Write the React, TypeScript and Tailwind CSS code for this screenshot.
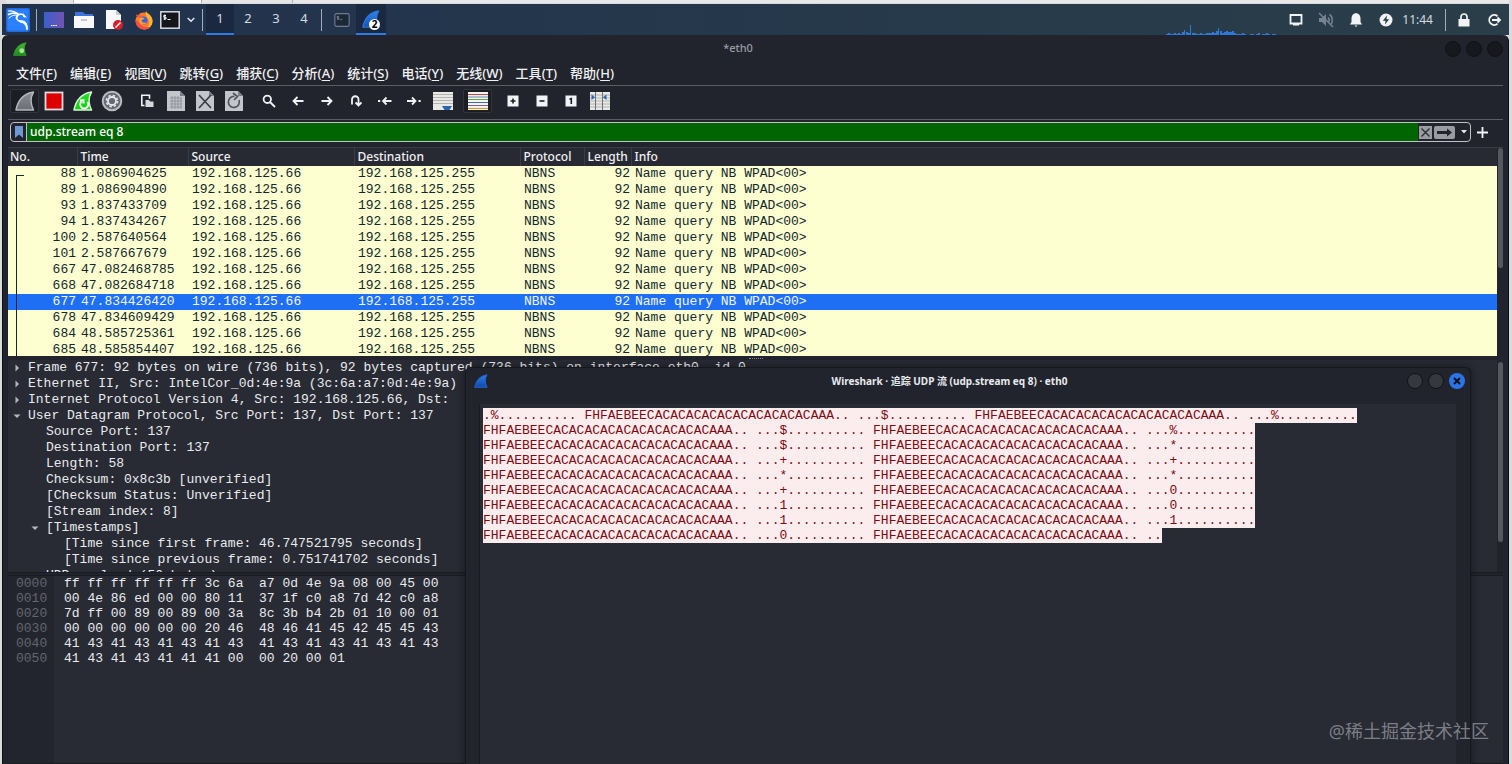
import { ReactNode, useState } from "react";

const packets = [
  { no: 88, time: "1.086904625" },
  { no: 89, time: "1.086904890" },
  { no: 93, time: "1.837433709" },
  { no: 94, time: "1.837434267" },
  { no: 100, time: "2.587640564" },
  { no: 101, time: "2.587667679" },
  { no: 667, time: "47.082468785" },
  { no: 668, time: "47.082684718" },
  { no: 677, time: "47.834426420" },
  { no: 678, time: "47.834609429" },
  { no: 684, time: "48.585725361" },
  { no: 685, time: "48.585854407" },
];

const menus = [
  ["文件", "F"],
  ["编辑", "E"],
  ["视图", "V"],
  ["跳转", "G"],
  ["捕获", "C"],
  ["分析", "A"],
  ["统计", "S"],
  ["电话", "Y"],
  ["无线", "W"],
  ["工具", "T"],
  ["帮助", "H"],
];

const details = [
  {
    level: 0,
    arrow: "right",
    text: "Frame 677: 92 bytes on wire (736 bits), 92 bytes captured (736 bits) on interface eth0, id 0",
  },
  {
    level: 0,
    arrow: "right",
    text: "Ethernet II, Src: IntelCor_0d:4e:9a (3c:6a:a7:0d:4e:9a)",
  },
  {
    level: 0,
    arrow: "right",
    text: "Internet Protocol Version 4, Src: 192.168.125.66, Dst:",
  },
  {
    level: 0,
    arrow: "down",
    text: "User Datagram Protocol, Src Port: 137, Dst Port: 137",
  },
  { level: 1, arrow: "", text: "Source Port: 137" },
  { level: 1, arrow: "", text: "Destination Port: 137" },
  { level: 1, arrow: "", text: "Length: 58" },
  { level: 1, arrow: "", text: "Checksum: 0x8c3b [unverified]" },
  { level: 1, arrow: "", text: "[Checksum Status: Unverified]" },
  { level: 1, arrow: "", text: "[Stream index: 8]" },
  { level: 1, arrow: "down", text: "[Timestamps]" },
  {
    level: 2,
    arrow: "",
    text: "[Time since first frame: 46.747521795 seconds]",
  },
  {
    level: 2,
    arrow: "",
    text: "[Time since previous frame: 0.751741702 seconds]",
  },
  { level: 1, arrow: "", text: "UDP payload (50 bytes)" },
];

const levels = ["pl-0", "pl-[18px]", "pl-9"];

const hexRows = [
  ["0000", "ff ff ff ff ff ff 3c 6a  a7 0d 4e 9a 08 00 45 00"],
  ["0010", "00 4e 86 ed 00 00 80 11  37 1f c0 a8 7d 42 c0 a8"],
  ["0020", "7d ff 00 89 00 89 00 3a  8c 3b b4 2b 01 10 00 01"],
  ["0030", "00 00 00 00 00 00 20 46  48 46 41 45 42 45 45 43"],
  ["0040", "41 43 41 43 41 43 41 43  41 43 41 43 41 43 41 43"],
  ["0050", "41 43 41 43 41 41 41 00  00 20 00 01"],
];

// NetBIOS encoding of "WPAD" padded with blanks
const nbName = "FHFAEBEE" + "CA".repeat(11) + "AA";
const dots = "..........";
const streamLines = [
  `.%${dots} ${nbName}.. ...$${dots} ${nbName}.. ...%${dots}`,
  `${nbName}.. ...$${dots} ${nbName}.. ...%${dots}`,
  `${nbName}.. ...$${dots} ${nbName}.. ...*${dots}`,
  `${nbName}.. ...+${dots} ${nbName}.. ...+${dots}`,
  `${nbName}.. ...*${dots} ${nbName}.. ...*${dots}`,
  `${nbName}.. ...+${dots} ${nbName}.. ...0${dots}`,
  `${nbName}.. ...1${dots} ${nbName}.. ...0${dots}`,
  `${nbName}.. ...1${dots} ${nbName}.. ...1${dots}`,
  `${nbName}.. ...0${dots} ${nbName}.. ..`,
];

const cpu = [
  1, 2, 1, 1, 2, 1, 2, 1, 3, 5, 3, 2, 10, 2, 2, 1, 1, 2, 1, 1, 2, 2, 2, 3, 2, 4,
  7, 4, 2, 3, 4, 3, 3, 4, 2, 1, 1, 1, 2, 1, 0, 0, 1, 1, 0, 1, 2, 0, 1, 1, 2, 1,
  0, 1, 1,
];

function Fin({
  id,
  from,
  to,
  edge,
  className,
  children,
}: {
  id: string;
  from: string;
  to: string;
  edge: string;
  className: string;
  children?: ReactNode;
}) {
  return (
    <svg viewBox="0 0 20 20" className={className}>
      <defs>
        <linearGradient id={id} x1="0" y1="0" x2="0" y2="1">
          <stop offset="0" stopColor={from} />
          <stop offset="1" stopColor={to} />
        </linearGradient>
      </defs>
      <path
        d="M1 19C3 9 9 2.5 18.5 1C15.5 6 15.5 13 18.5 19Z"
        fill={`url(#${id})`}
        stroke={edge}
        strokeWidth="1.5"
        strokeLinejoin="round"
      />
      {children}
    </svg>
  );
}

function KaliIcon() {
  return (
    <svg viewBox="0 0 24 24" className="size-6">
      <rect width="24" height="24" rx="2" fill="#2468d8" />
      <rect x="1.5" y="1.5" width="21" height="21" rx="1" fill="#2a80ff" />
      <g fill="none" stroke="#fff" strokeLinecap="round">
        <path d="M2.500 3C6 2.500 9 3.500 11.500 5.500" strokeWidth="1.200" />
        <path
          d="M2.500 6.500C6 4.500 10 5 13 6.500C15 5.500 17 6 18.500 8.500"
          strokeWidth="1.600"
        />
        <path d="M3 10C5.500 7.500 8 7 11 7" strokeWidth="1" />
        <path
          d="M12 7C9 10 11 13 15 13.500C19 14 21 17 21 21"
          strokeWidth="1.800"
        />
        <path d="M14.500 13.500C17 13.500 19.500 15 20 17" strokeWidth="2.300" />
      </g>
      <path d="M17 5l1.500 2 2.500 2.500-3.500-.5z" fill="#fff" />
    </svg>
  );
}

function FirefoxIcon() {
  return (
    <svg viewBox="0 0 20 20" className="size-5">
      <circle cx="10" cy="11" r="8.500" fill="#ff7a2a" />
      <path
        d="M12 1c1 3 6 4 6.500 9.500c.4 5-3.500 9-8.500 9c6-3 6.500-9 3-12c-1-2-2-4-1-6.500z"
        fill="#ffb52e"
      />
      <path
        d="M2 4c0 2 1 3 2.500 3.500l3.500-.5l-2-2.500l-2.500 1z"
        fill="#ff5a3c"
      />
      <path
        d="M1.500 10c0 6 4 9.500 8.500 9.500c3 0 5-1 6.500-3c-5 2-10 0-11-4z"
        fill="#fb4a48"
      />
      <circle cx="9.500" cy="10.500" r="4" fill="#3c62dc" />
      <path
        d="M5.500 8c2-1 4-.5 5 .5c-1 1-2.500 1-3 2c.5 2.500 3.500 3 5.500 1.500c-1 3-6 3.500-8 .5z"
        fill="#ffa030"
      />
    </svg>
  );
}

function Terminal({ dim }: { dim?: boolean }) {
  return (
    <svg
      viewBox="0 0 20 18"
      className={dim ? "h-3.5 w-4 opacity-40" : "h-[18px] w-5"}
    >
      <rect
        x=".8"
        y=".8"
        width="18.4"
        height="16.4"
        rx={dim ? 2 : 0}
        fill="#14161c"
        stroke="#e4e6ea"
        strokeWidth="1.4"
      />
      <path
        d="M6 4.500H3.800v1.700H6V8H3.500M4.800 3.500v5.500M7.500 8.500h3"
        stroke="#fff"
        strokeWidth="1"
        fill="none"
      />
    </svg>
  );
}

function Page({ children }: { children?: ReactNode }) {
  return (
    <svg viewBox="0 0 20 22" className="h-[22px] w-5">
      <path d="M1 1h13l5 5v15H1z" fill="#c3c5cb" />
      <path d="M14 1v5h5z" fill="#7c7f88" />
      {children}
    </svg>
  );
}

function Line({ d }: { d: string }) {
  return (
    <svg
      viewBox="0 0 14 14"
      className="size-3.5"
      fill="none"
      stroke="#f2f3f5"
      strokeWidth="1.8"
    >
      <path d={d} />
    </svg>
  );
}

function Small({ d }: { d: string }) {
  return (
    <svg viewBox="0 0 12 12" className="size-3">
      <rect x=".5" y=".5" width="11" height="11" fill="#f2f3f5" />
      <path d={d} fill="none" stroke="#1b1d24" strokeWidth="1.6" />
    </svg>
  );
}

const toolGroups: { label: string; on?: boolean; icon: ReactNode }[][] = [
  [
    {
      label: "开始捕获分组",
      on: true,
      icon: (
        <Fin
          id="fin-gray"
          from="#8b8e97"
          to="#6b6e77"
          edge="#b4b6bc"
          className="size-5"
        />
      ),
    },
    {
      label: "停止捕获分组",
      icon: (
        <svg viewBox="0 0 20 20" className="size-5">
          <rect
            x="1.5"
            y="1.5"
            width="17"
            height="17"
            fill="#dc0000"
            stroke="#dcdde0"
            strokeWidth="1.8"
          />
        </svg>
      ),
    },
    {
      label: "重新开始当前捕获",
      icon: (
        <Fin
          id="fin-restart"
          from="#1fe01f"
          to="#17d017"
          edge="#d6f5d6"
          className="size-5"
        >
          <path
            d="M8.500 10.500a4 4 0 1 0 6 .5M7 9.500l3.500-.5v3.500"
            fill="none"
            stroke="#fff"
            strokeWidth="1.9"
          />
        </Fin>
      ),
    },
    {
      label: "捕获选项",
      icon: (
        <svg viewBox="0 0 22 22" className="size-[22px]" fill="none">
          <circle
            cx="11"
            cy="11"
            r="9.3"
            fill="#666973"
            stroke="#b9bbc2"
            strokeWidth="2"
          />
          <circle
            cx="11"
            cy="11"
            r="5.6"
            stroke="#e6e7ea"
            strokeWidth="1.6"
            strokeDasharray="2.4 2"
          />
          <circle cx="11" cy="11" r="4" stroke="#e6e7ea" strokeWidth="1.8" />
        </svg>
      ),
    },
  ],
  [
    {
      label: "打开",
      icon: (
        <svg viewBox="0 0 14 14" className="size-3.5">
          <path
            d="M4.500 11.500H1.800V1.300h7.700v3.500"
            fill="none"
            stroke="#f2f3f5"
            strokeWidth="1.6"
          />
          <path d="M5.500 6H9l1 1.500h3.500V13h-8z" fill="#d6d8dc" />
        </svg>
      ),
    },
    {
      label: "保存",
      icon: (
        <Page>
          <path
            d="M4 8h12M4 11h12M4 14h12M4 17h12M6 6v13M9 6v13M12 6v13M15 8v11"
            stroke="#8d9099"
            strokeWidth=".9"
          />
        </Page>
      ),
    },
    {
      label: "关闭",
      icon: (
        <Page>
          <path d="M4 5l12 13M16 5L4 18" stroke="#3a3d47" strokeWidth="1.7" />
        </Page>
      ),
    },
    {
      label: "重新加载",
      icon: (
        <Page>
          <path
            d="M15 10a5.500 5.500 0 1 1-4.500-3.500M9 3l4.500 3.500L10 10"
            fill="none"
            stroke="#50535d"
            strokeWidth="1.7"
          />
        </Page>
      ),
    },
  ],
  [
    {
      label: "查找分组",
      icon: (
        <Line d="M9 5.300a3.700 3.700 0 1 1-7.400 0a3.700 3.700 0 0 1 7.400 0M8 8l5 5" />
      ),
    },
    { label: "后退", icon: <Line d="M12.500 7H2.500M6.500 3L2.500 7l4 4" /> },
    { label: "前进", icon: <Line d="M1.500 7h10M7.500 3l4 4-4 4" /> },
    {
      label: "转到分组",
      icon: (
        <Line d="M3 10.500V5.500a3 3 0 0 1 6.500 0v6M6.500 8.500l3 3 3-3" />
      ),
    },
    {
      label: "首个分组",
      icon: <Line d="M13.500 7H5M8.500 3.500L5 7l3.500 3.500M0 7h2.200" />,
    },
    {
      label: "最新分组",
      icon: <Line d="M0 7h8.500M5 3.500L8.500 7 5 10.500M11.500 7h2.200" />,
    },
    {
      label: "自动滚动",
      icon: (
        <svg viewBox="0 0 20 20" className="size-5">
          <path d="M0 1h20v18H0z" fill="#e9e9e6" />
          <path
            d="M0 3.500h20M0 6.500h20M0 9.500h20M0 12.500h20"
            stroke="#b2b4b2"
            strokeWidth="1"
          />
          <path d="M9 15h10l-2.500 4h-5z" fill="#2e64ad" />
        </svg>
      ),
    },
  ],
  [
    {
      label: "分组着色",
      on: true,
      icon: (
        <svg viewBox="0 0 20 20" className="size-5">
          <path d="M0 1h20v18H0z" fill="#f4f4f1" />
          <path d="M0 3.500h20" stroke="#cf4540" strokeWidth="1" />
          <path d="M0 6h20" stroke="#6482bd" strokeWidth="1" />
          <path d="M0 8.500h20" stroke="#62a93d" strokeWidth="1" />
          <path d="M0 11.500h20" stroke="#4568ae" strokeWidth="1" />
          <path d="M0 14.500h20" stroke="#7a5c8d" strokeWidth="1" />
          <path d="M0 17.500h20" stroke="#c9a032" strokeWidth="1.2" />
        </svg>
      ),
    },
  ],
  [
    { label: "放大", icon: <Small d="M6 3.500v5M3.500 6h5" /> },
    { label: "缩小", icon: <Small d="M3.500 6h5" /> },
    { label: "正常大小", icon: <Small d="M4.500 4.300L6.300 3.600V9" /> },
    {
      label: "调整列宽",
      icon: (
        <svg viewBox="0 0 20 20" className="size-5">
          <path d="M0 1h20v18H0z" fill="#e9e9e6" />
          <path
            d="M0 4h20M0 7h20M0 10h20M0 13h20M0 16h20"
            stroke="#b2b4b2"
            strokeWidth="1"
          />
          <path d="M5.500 1v18M12.500 1v18" stroke="#6e7178" strokeWidth="1" />
          <path
            d="M1.500 3.500L5 6.300 1.500 9zM16.500 3.500L13 6.300 16.500 9z"
            fill="#2e64ad"
          />
        </svg>
      ),
    },
  ],
];

function TaskBar() {
  const [workspace, setWorkspace] = useState(1);

  return (
    <header className="flex h-[31px] shrink-0 items-center justify-between bg-linear-to-r from-[#21324d] to-[#2a3e49] pl-1 text-[13px] text-[#d5dae0]">
      <div className="flex h-full items-center">
        <button aria-label="应用程序">
          <KaliIcon />
        </button>
        <span className="mr-[7px] ml-1.5 h-[22px] w-px bg-[#a5abb5]" />
        <div className="flex items-center gap-2.5">
          <button aria-label="桌面" className="flex size-5 items-center">
            <svg viewBox="0 0 20 16" className="h-4 w-5">
              <defs>
                <linearGradient id="desk">
                  <stop offset="0" stopColor="#3b5fca" />
                  <stop offset="1" stopColor="#7353b4" />
                </linearGradient>
              </defs>
              <path d="M0 0h20v16H0z" fill="url(#desk)" />
              <path
                d="M7 13.500h6"
                stroke="#fff"
                strokeDasharray="1.5 .7"
              />
            </svg>
          </button>
          <button aria-label="文件管理器">
            <svg viewBox="0 0 20 20" className="size-5">
              <path d="M1 2h8l2 2h8v4H1z" fill="#3b74dc" />
              <path d="M0 6h20v12H0z" fill="#f8f8f8" />
              <path d="M7 10h6" stroke="#a9abb0" strokeWidth="1.2" />
            </svg>
          </button>
          <button aria-label="文本编辑器">
            <svg viewBox="0 0 20 20" className="size-5">
              <path d="M2 0h10l5 5v14H2z" fill="#f8f8f8" />
              <path d="M12 0v5h5z" fill="#c9cbd0" />
              <circle cx="14" cy="15" r="5" fill="#d51f2b" />
              <path d="M11.500 17.500l5-5" stroke="#fff" strokeWidth="1.5" />
            </svg>
          </button>
          <button aria-label="Firefox">
            <FirefoxIcon />
          </button>
        </div>
        <button aria-label="终端" className="ml-1.5">
          <Terminal />
        </button>
        <button aria-label="更多终端" className="mx-[7px]">
          <svg
            viewBox="0 0 8 6"
            className="h-1.5 w-2"
            fill="none"
            stroke="#e6e9ed"
            strokeWidth="1.5"
          >
            <path d="M.7 1l3.300 3.300L7.300 1" />
          </svg>
        </button>
        <span className="mr-[3px] h-[22px] w-px bg-[#a5abb5]" />
        {[1, 2, 3, 4].map((n) => (
          <button
            key={n}
            onClick={() => setWorkspace(n)}
            className={
              n === workspace
                ? "h-full w-7 border-b-2 border-[#2d7be8] bg-[#1b2940]"
                : "h-full w-7 border-b-2 border-transparent"
            }
          >
            {n}
          </button>
        ))}
        <span className="mr-3 ml-[3px] h-[22px] w-px bg-[#a5abb5]" />
        <button aria-label="终端窗口">
          <Terminal dim />
        </button>
        <button
          aria-label="Wireshark 窗口"
          className="relative ml-1.5 flex h-full w-[30px] items-center justify-center border-b-2 border-[#2d7be8] bg-[#1b2940]"
        >
          <Fin
            id="fin-task"
            from="#2f86f0"
            to="#1251b5"
            edge="#2d75d8"
            className="size-[18px]"
          />
          <span className="absolute right-1.5 bottom-[3px] flex size-[11px] items-center justify-center rounded-full bg-white text-[10px] leading-[11px] font-bold text-black">
            2
          </span>
        </button>
      </div>
      <div className="flex h-full items-center pr-[7px]">
        <svg
          viewBox="0 0 112 12"
          className="mr-2.5 h-3 w-28 self-end"
          shapeRendering="crispEdges"
        >
          {cpu.map((v, i) => (
            <rect
              key={i}
              x={i * 2}
              y={12 - v}
              width={v > 4 ? 1 : 2}
              height={v}
              fill="#2d78dc"
            />
          ))}
        </svg>
        <div className="flex items-center gap-3.5">
          <button aria-label="显示器">
            <svg viewBox="0 0 16 16" className="size-4">
              <path
                d="M2.500 3h11v8.500h-11z"
                fill="none"
                stroke="#f2f3f5"
                strokeWidth="1.8"
              />
              <path d="M5 11h6v2.500H5z" fill="#f2f3f5" />
            </svg>
          </button>
          <button aria-label="音量">
            <svg
              viewBox="0 0 16 16"
              className="size-4"
              stroke="#75838e"
              fill="none"
              strokeWidth="1.5"
            >
              <path d="M1 6h3l4-4v12l-4-4H1z" fill="#75838e" stroke="none" />
              <path d="M10 5.500c1.500 1.500 1.500 3.500 0 5M11.500 2.500c3.500 2 3.500 8 1 10.500M1 1l14 14" />
            </svg>
          </button>
          <button aria-label="通知">
            <svg viewBox="0 0 16 16" className="size-4" fill="#f2f3f5">
              <path d="M8 1c-3 .5-4.500 2.500-4.500 5.500V10L2 12.500h12L12.500 10V6.500C12.500 3.500 11 1.500 8 1zM6.500 13.500h3L8 15z" />
            </svg>
          </button>
          <button aria-label="电源">
            <svg viewBox="0 0 16 16" className="size-4">
              <circle cx="8" cy="8" r="6.500" fill="#f2f3f5" />
              <path
                d="M9 3.500L4.800 8.700h2.700L7 12.500l4.200-5.200H8.500z"
                fill="#2a3e49"
              />
            </svg>
          </button>
        </div>
        <time className="ml-2 text-xs">11:44</time>
        <span className="mr-2.5 ml-3 h-[22px] w-px bg-[#a5abb5]" />
        <button aria-label="锁定屏幕">
          <svg viewBox="0 0 16 16" className="size-4">
            <path d="M2.500 7h11v7.500h-11z" fill="#f2f3f5" />
            <path
              d="M5 7V5a3 3 0 0 1 6 0v2"
              fill="none"
              stroke="#f2f3f5"
              strokeWidth="1.7"
            />
          </svg>
        </button>
        <button aria-label="注销" className="ml-3.5">
          <svg
            viewBox="0 0 16 16"
            className="size-4"
            fill="none"
            stroke="#f2f3f5"
            strokeWidth="1.8"
          >
            <path d="M11.500 4.200a5 5 0 1 0 0 7.600M6 8h8M11.500 5.500L14 8l-2.500 2.500" />
          </svg>
        </button>
      </div>
    </header>
  );
}

function FilterBar() {
  const [filter, setFilter] = useState("udp.stream eq 8");

  return (
    <div className="mr-[15px] ml-0.5 flex items-center gap-1.5 pt-0.5 pb-[5px]">
      <div className="flex h-5 flex-1 items-stretch rounded-sm border border-[#bfc1c6]">
        <button
          aria-label="书签"
          className="flex w-4 items-center justify-center border-r border-[#bfc1c6]"
        >
          <svg viewBox="0 0 8 12" className="h-3 w-2">
            <path d="M0 0h8v12L4 8.500 0 12z" fill="#6f98d2" />
          </svg>
        </button>
        <input
          aria-label="显示过滤器"
          value={filter}
          onChange={(e) => setFilter(e.target.value)}
          className="min-w-0 flex-1 bg-[#006600] px-[3px] text-xs font-medium text-white outline-none"
        />
        <div className="flex items-center gap-0.5 pl-px">
          <button aria-label="清除" className="bg-[#9a9ca2]">
            <svg viewBox="0 0 13 13" className="size-[13px]">
              <path
                d="M2.500 2.500l8 8M10.500 2.500l-8 8"
                stroke="#2b2d36"
                strokeWidth="1.3"
              />
            </svg>
          </button>
          <button aria-label="应用" className="rounded-xs bg-[#9a9ca2]">
            <svg viewBox="0 0 21 13" className="h-[13px] w-[21px]">
              <path d="M3 5h10V2.500l5 4-5 4V8H3z" fill="#22242c" />
            </svg>
          </button>
          <button aria-label="历史" className="flex w-[13px] justify-center">
            <svg viewBox="0 0 6 4" className="h-1 w-1.5">
              <path d="M0 0h6L3 3.500z" fill="#e6e7ea" />
            </svg>
          </button>
        </div>
      </div>
      <button aria-label="添加">
        <svg viewBox="0 0 11 11" className="size-[11px]">
          <path
            d="M5.500 0v11M0 5.500h11"
            stroke="#f2f3f5"
            strokeWidth="1.8"
          />
        </svg>
      </button>
    </div>
  );
}

function PacketList() {
  const [selected, setSelected] = useState(677);
  const head = "border-r border-[#3a3c46] pl-[3px] font-medium";

  return (
    <div className="flex h-[209px] shrink-0 border-t border-[#3a3c46]">
      <div className="relative flex-1 overflow-hidden bg-[#feffd0]">
        <table className="w-full table-fixed border-collapse text-left">
          <colgroup>
            <col className="w-[69px]" />
            <col className="w-[111px]" />
            <col className="w-[166px]" />
            <col className="w-[166px]" />
            <col className="w-[64px]" />
            <col className="w-[47px]" />
            <col />
          </colgroup>
          <thead>
            <tr className="h-[18px] bg-[#282a33] text-xs leading-[18px] text-[#f0f1f3]">
              <th className="border-r border-[#3a3c46] pl-0.5 font-medium">
                No.
              </th>
              <th className={head}>Time</th>
              <th className={head}>Source</th>
              <th className={head}>Destination</th>
              <th className={head}>Protocol</th>
              <th className={head}>Length</th>
              <th className="pl-[3px] font-medium">Info</th>
            </tr>
          </thead>
          <tbody className="font-['Liberation_Mono',monospace] text-[13px] leading-4">
            {packets.map((p) => (
              <tr
                key={p.no}
                onClick={() => setSelected(p.no)}
                className={
                  p.no === selected
                    ? "h-4 bg-[#1f6ff5] text-[#f3f6ff]"
                    : "h-4 text-[#12272e]"
                }
              >
                <td className="pr-px text-right">{p.no}</td>
                <td className="pl-1">{p.time}</td>
                <td className="pl-1">192.168.125.66</td>
                <td className="pl-1">192.168.125.255</td>
                <td className="pl-1">NBNS</td>
                <td className="pr-px text-right">92</td>
                <td className="pl-1 whitespace-pre">
                  {"Name query NB WPAD<00>"}
                </td>
              </tr>
            ))}
          </tbody>
        </table>
        <span className="absolute top-[27px] bottom-0 left-2 w-2 border-t border-l border-[#12272e]" />
      </div>
      <div className="w-1.5 pl-px">
        <div className="h-[120px] w-[5px] rounded-full bg-[#55585f]" />
      </div>
    </div>
  );
}

function Details() {
  return (
    <div className="flex h-[213px] shrink-0 overflow-hidden border-b border-[#191b22] bg-[#282a34]">
      <ul className="flex-1 font-['Liberation_Mono',monospace] text-[13px] leading-4 text-[#e8eaee]">
        {details.map((d) => (
          <li key={d.text} className={levels[d.level]}>
            <div className="flex items-center whitespace-pre">
              <span className="flex w-5 justify-center pr-[3px]">
                {d.arrow !== "" && (
                  <button aria-label={d.text}>
                    <svg viewBox="0 0 8 8" className="size-2">
                      <path
                        d={
                          d.arrow === "right"
                            ? "M2.500 .5L6 4 2.500 7.500z"
                            : "M.5 2.500h7L4 6z"
                        }
                        fill="#b4b7bd"
                      />
                    </svg>
                  </button>
                )}
              </span>
              {d.text}
            </div>
          </li>
        ))}
      </ul>
      <div className="w-1.5 bg-[#21232b] pt-0.5 pl-px">
        <div className="h-[180px] w-[5px] rounded-full bg-[#55585f]" />
      </div>
    </div>
  );
}

function HexDump() {
  return (
    <div className="mt-0.5 flex min-h-[96px] flex-1 border-y border-[#191b22] bg-[#282a34] font-['Liberation_Mono',monospace] text-[13px] leading-[15px]">
      <div className="w-[46px] bg-[#22252d] pl-2 text-[#63666e]">
        {hexRows.map(([offset]) => (
          <div key={offset}>{offset}</div>
        ))}
      </div>
      <div className="flex-1 pl-2.5 whitespace-pre text-[#e8eaee]">
        {hexRows.map(([offset, bytes]) => (
          <div key={offset}>{bytes}</div>
        ))}
      </div>
    </div>
  );
}

function StreamWindow() {
  return (
    <section className="absolute top-[332px] right-[37px] bottom-0 left-[462px] flex flex-col rounded-t-md border border-b-0 border-[#15171d] bg-[#22242d] shadow-[0_0_8px_rgba(0,0,0,0.4)]">
      <div className="flex h-9 shrink-0 items-start justify-between pt-[5px] pr-[5px] pl-2">
        <Fin
          id="fin-dialog"
          from="#2f80ee"
          to="#0d47b0"
          edge="#2464c4"
          className="mt-px size-3.5"
        />
        <h2 className="pl-1 text-[10px] leading-4 font-bold text-[#e8eaee]">
          Wireshark · 追踪 UDP 流 (udp.stream eq 8) · eth0
        </h2>
        <div className="flex gap-[5px]">
          <button
            aria-label="最小化"
            className="size-4 rounded-full border border-[#111217] bg-[#363840]"
          />
          <button
            aria-label="最大化"
            className="size-4 rounded-full border border-[#111217] bg-[#363840]"
          />
          <button
            aria-label="关闭窗口"
            className="flex size-4 items-center justify-center rounded-full bg-[#2a74e8]"
          >
            <svg
              viewBox="0 0 8 8"
              className="size-2"
              stroke="#0e1016"
              strokeWidth="2"
            >
              <path d="M1 1l6 6M7 1L1 7" />
            </svg>
          </button>
        </div>
      </div>
      <div className="mr-3.5 ml-[13px] flex-1 overflow-hidden border-l border-[#191b22] bg-[#282a34] pt-1 pl-[3px] font-['Liberation_Mono',monospace] text-[13px] leading-[15px] whitespace-pre text-[#7f0a14]">
        {streamLines.map((line, i) => (
          <div key={i} className="w-fit bg-[#fbeded]">
            {line}
          </div>
        ))}
      </div>
    </section>
  );
}

export default function App() {
  return (
    <div className="relative flex h-screen min-h-[700px] flex-col overflow-hidden bg-[#d9dbdc] pr-[3px] pl-0.5 font-['Noto_Sans','Noto_Sans_CJK_SC',sans-serif]">
      <div className="flex h-1 shrink-0 items-start">
        <span className="ml-1 h-[3px] w-[68px] border-r border-[#aeb0b4] bg-[#e6e6e6]" />
        <span className="h-[3px] w-32 border-r border-[#aeb0b4] bg-white" />
        <span className="h-[3px] w-[91px] border-r border-[#aeb0b4] bg-[#e6e6e6]" />
        <span className="h-[3px] flex-1 bg-[#e8e8e8]" />
      </div>
      <TaskBar />
      <main className="relative flex min-h-0 flex-1 flex-col rounded-t-md border-x border-[#0e0f13] bg-[#22242d] px-[5px]">
        <div className="flex h-[27px] shrink-0 items-center">
          <div className="flex flex-1 pl-[5px]">
            <Fin
              id="fin-main"
              from="#4bb53a"
              to="#1d8a17"
              edge="#2f9a28"
              className="size-3.5"
            >
              <circle cx="12.5" cy="12.5" r="3.5" fill="#a4e39a" />
            </Fin>
          </div>
          <h1 className="pr-10 text-[11px] font-medium text-[#9a9da5]">
            *eth0
          </h1>
          <div className="flex flex-1 justify-end gap-[5px]">
            <button
              aria-label="最小化主窗口"
              className="size-4 rounded-full border border-[#111217] bg-[#17181e]"
            />
            <button
              aria-label="最大化主窗口"
              className="size-4 rounded-full border border-[#111217] bg-[#17181e]"
            />
            <button
              aria-label="关闭主窗口"
              className="size-4 rounded-full border border-[#111217] bg-[#17181e]"
            />
          </div>
        </div>
        <nav className="flex h-6 shrink-0 items-center gap-[13px] border-b border-[#5b5d65] pl-2 text-[13px] font-medium text-[#f0f1f3]">
          {menus.map(([label, key]) => (
            <button key={key} className="whitespace-nowrap">
              {label}(<span className="underline underline-offset-2">{key}</span>)
            </button>
          ))}
        </nav>
        <div className="flex h-[34px] shrink-0 items-center gap-1.5 border-b border-[#5b5d65] pb-1 pl-0.5">
          {toolGroups.map((group, i) => (
            <div key={i} className="flex">
              {group.map((t) => (
                <button
                  key={t.label}
                  aria-label={t.label}
                  className={
                    t.on
                      ? "flex h-6 w-[29px] items-center justify-center rounded-xs border border-[#32343c] bg-[#1c1e25]"
                      : "flex h-6 w-[29px] items-center justify-center"
                  }
                >
                  {t.icon}
                </button>
              ))}
            </div>
          ))}
        </div>
        <FilterBar />
        <PacketList />
        <div className="flex h-1 shrink-0 items-center justify-center">
          <span className="w-3.5 border-t border-dotted border-[#8b8e97]" />
        </div>
        <Details />
        <HexDump />
        <StreamWindow />
      </main>
      <p className="pointer-events-none absolute right-[23px] bottom-5 text-[18px] leading-[26px] text-[#7c7e85]">
        @稀土掘金技术社区
      </p>
    </div>
  );
}
